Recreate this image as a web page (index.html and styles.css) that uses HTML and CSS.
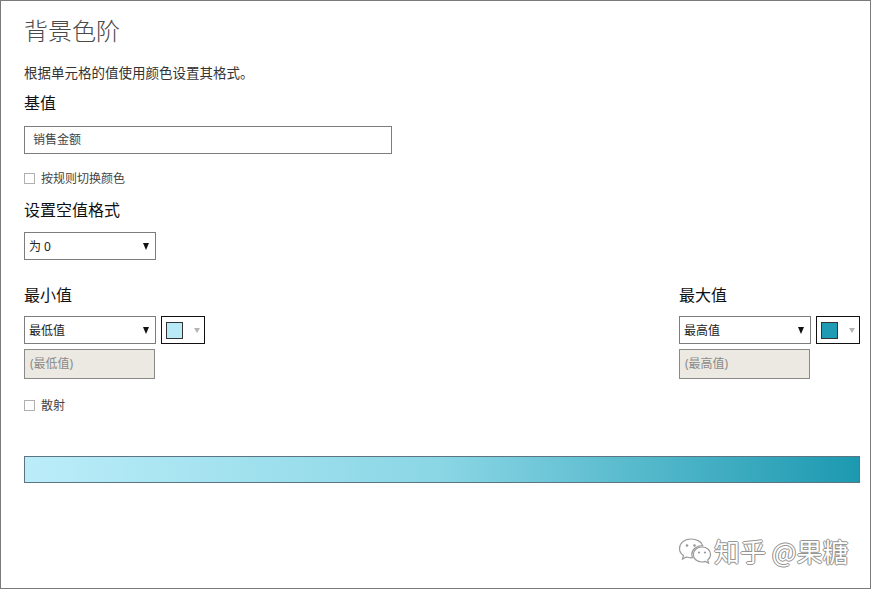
FILE: index.html
```html
<!DOCTYPE html>
<html>
<head>
    <meta charset="utf-8">
    <title>背景色阶</title>
    <link rel="stylesheet" href="styles.css">
</head>
<body>
    <div class="panel">
        <h1 class="title">背景色阶</h1>
        <p class="desc">根据单元格的值使用颜色设置其格式。</p>

        <h2 class="label label-base">基值</h2>
        <div class="textbox">销售金额</div>

        <div class="check check-rule">
            <span class="box"></span>
            <span>按规则切换颜色</span>
        </div>

        <h2 class="label label-empty">设置空值格式</h2>
        <div class="dropdown">
            <span>为 0</span>
            <span class="arrow"></span>
        </div>

        <div class="range">
            <div class="range-group">
                <h2 class="label">最小值</h2>
                <div class="pick-row">
                    <div class="dropdown">
                        <span>最低值</span>
                        <span class="arrow"></span>
                    </div>
                    <div class="color-btn">
                        <span class="swatch swatch-min"></span>
                        <span class="arrow arrow-gray"></span>
                    </div>
                </div>
                <div class="textbox disabled">(最低值)</div>
            </div>
            <div class="range-group">
                <h2 class="label">最大值</h2>
                <div class="pick-row">
                    <div class="dropdown">
                        <span>最高值</span>
                        <span class="arrow"></span>
                    </div>
                    <div class="color-btn">
                        <span class="swatch swatch-max"></span>
                        <span class="arrow arrow-gray"></span>
                    </div>
                </div>
                <div class="textbox disabled">(最高值)</div>
            </div>
        </div>

        <div class="check check-diverge">
            <span class="box"></span>
            <span>散射</span>
        </div>

        <div class="gradient"></div>

        <!-- watermark -->
        <div class="watermark">
            <svg width="34" height="30" viewBox="0 0 34 30">
                <g fill="#fff" stroke="#9a9a9a" stroke-width="1.2">
                    <path d="M13 3 C6 3 1.5 7.5 1.5 12.5 C1.5 15.5 3 17.8 5.5 19.5 L4.5 23 L8.5 21 C10 21.5 11.5 21.8 13 21.8 C13.5 21.8 14 21.8 14.5 21.7 C14 20.7 13.8 19.6 13.8 18.5 C13.8 13.5 18.3 9.6 24 9.6 C24.3 9.6 24.6 9.6 24.8 9.6 C23.6 5.8 18.8 3 13 3 Z"/>
                    <path d="M24 11 C18.8 11 15.3 14.5 15.3 18.5 C15.3 22.5 18.8 26 24 26 C25.2 26 26.3 25.8 27.3 25.4 L30.5 27 L29.7 24 C31.5 22.6 32.6 20.7 32.6 18.5 C32.6 14.5 29 11 24 11 Z"/>
                </g>
                <g fill="#9a9a9a">
                    <circle cx="9" cy="9.5" r="1.3"/>
                    <circle cx="16.5" cy="9.5" r="1.3"/>
                    <circle cx="21" cy="16.5" r="1.1"/>
                    <circle cx="27" cy="16.5" r="1.1"/>
                </g>
            </svg>
            <span>知乎 @果糖</span>
        </div>
    </div>
</body>
</html>
```

FILE: styles.css
```css
body {
    margin: 0;
    padding: 0;
    background: #fff;
    font-family: "Noto Sans", "Noto Sans CJK SC", sans-serif;
    color: #333;
}

.panel {
    position: relative;
    box-sizing: border-box;
    width: 871px;
    height: 589px;
    border: 1px solid #7a7a7a;
    padding: 15px 10px 0 23px;
}

.title {
    margin: 0;
    font-size: 24px;
    line-height: 30px;
    font-weight: 300;
    color: #4a4a4a;
}

.desc {
    margin: 18px 0 0;
    font-size: 13.5px;
    line-height: 18px;
    color: #333;
}

.label {
    margin: 0;
    font-size: 16px;
    line-height: 20px;
    font-weight: 400;
    color: #111;
}

.label-base {
    margin-top: 11px;
}

.label-empty {
    margin-top: 14px;
}

.textbox {
    box-sizing: border-box;
    width: 368px;
    height: 28px;
    margin-top: 13px;
    border: 1px solid #7d7d7d;
    padding: 0 8px;
    font-size: 12px;
    line-height: 26px;
    color: #444;
}

.textbox.disabled {
    width: 131px;
    height: 30px;
    margin-top: 5px;
    padding: 0 5px;
    line-height: 28px;
    background: #ebe9e1;
    border-color: #8a8a8a;
    color: #8a8a8a;
}

.check {
    display: flex;
    align-items: center;
    gap: 6px;
    height: 16px;
    font-size: 12px;
    color: #444;
}

.check .box {
    box-sizing: border-box;
    width: 11px;
    height: 11px;
    border: 1px solid #b0b0b0;
    background: #fff;
}

.check-rule {
    margin-top: 16px;
}

.check-diverge {
    margin-top: 18px;
}

.dropdown {
    box-sizing: border-box;
    display: flex;
    align-items: center;
    justify-content: space-between;
    width: 132px;
    height: 28px;
    margin-top: 12px;
    border: 1px solid #7d7d7d;
    padding: 0 4px 0 4px;
    font-size: 12px;
    color: #222;
}

.arrow {
    width: 0;
    height: 0;
    margin-right: 2px;
    border-left: 3.5px solid transparent;
    border-right: 3.5px solid transparent;
    border-top: 7px solid #111;
}

.arrow-gray {
    border-left-width: 3px;
    border-right-width: 3px;
    border-top: 5px solid #b5b5b5;
    margin-right: 4px;
}

.range {
    display: flex;
    justify-content: space-between;
    margin-top: 25px;
}

.pick-row {
    display: flex;
    gap: 5px;
    margin-top: 11px;
}

.pick-row .dropdown {
    margin-top: 0;
}

.color-btn {
    box-sizing: border-box;
    display: flex;
    align-items: center;
    justify-content: space-between;
    width: 44px;
    height: 28px;
    border: 1px solid #111;
    padding: 0 0 0 4px;
}

.swatch {
    box-sizing: border-box;
    width: 17px;
    height: 17px;
    border: 1px solid #333;
}

.swatch-min {
    background: #b8eaf8;
}

.swatch-max {
    background: #1f9bb3;
}

.gradient {
    box-sizing: border-box;
    width: 836px;
    height: 27px;
    margin-top: 43px;
    border: 1px solid #5d7582;
    background: linear-gradient(to right, #bbedf9, #8ad6e5 50%, #1c99b0);
}

.watermark {
    position: absolute;
    left: 677px;
    top: 531px;
    display: flex;
    align-items: center;
    gap: 2px;
    font-family: "Noto Sans CJK SC", sans-serif;
    font-size: 26px;
    color: #fff;
    text-shadow: 0 0 1px #777, 1px 0 0 #999, -1px 0 0 #999, 0 1px 0 #999, 0 -1px 0 #999;
}
```
